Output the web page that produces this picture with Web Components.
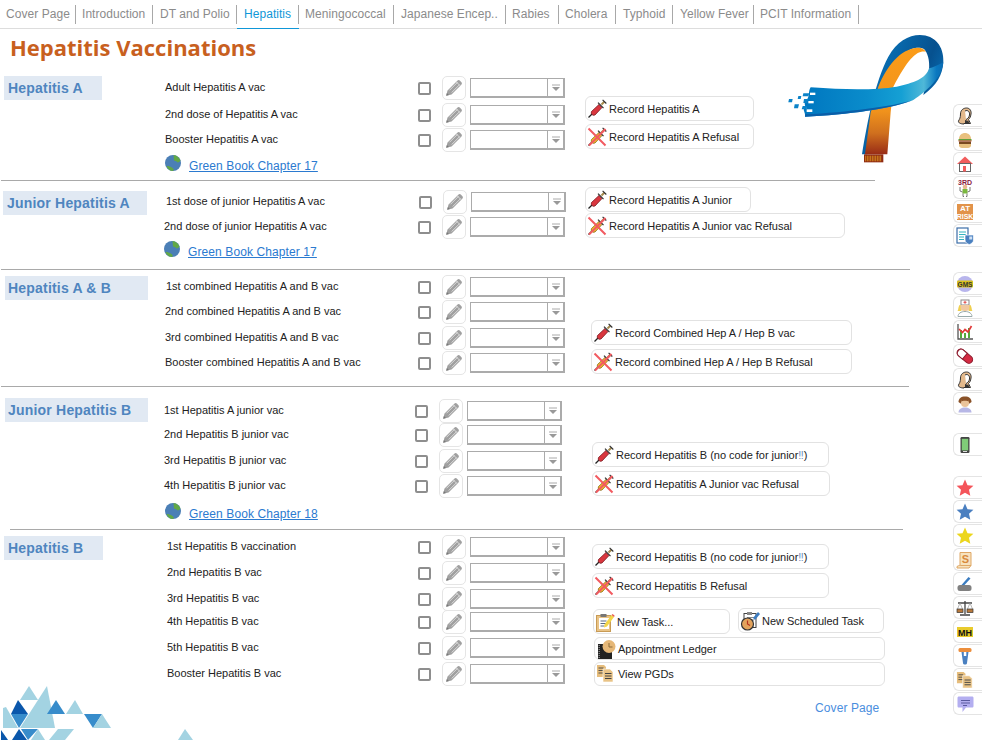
<!DOCTYPE html>
<html><head><meta charset="utf-8">
<style>
html,body{margin:0;padding:0;background:#fff}
body{width:982px;height:740px;overflow:hidden;font-family:"Liberation Sans",Arial,sans-serif}
#page{display:flex;flex-direction:column;width:982px;height:740px;position:relative}
#body{display:flex;flex:1;min-height:0}
#main{width:953px;flex:none;display:flex;flex-direction:column}
</style></head><body>
<div id="page">
<vx-tabs></vx-tabs>
<div id="body">
<div id="main">
<vx-title>Hepatitis Vaccinations</vx-title>

<vx-section head="Hepatitis A" hx="4" hy="0" hw="98" rt="0" h="105" lx="1" lw="874">
  <vx-row label="Adult Hepatitis A vac" lx="165" cx="418" px="442" sx="470" t="0"></vx-row>
  <vx-row label="2nd dose of Hepatitis A vac" lx="165" cx="418" px="442" sx="470" t="3"></vx-row>
  <vx-row label="Booster Hepatitis A vac" lx="165" cx="418" px="442" sx="470" t="1"></vx-row>
  <vx-link x="165" t="3">Green Book Chapter 17</vx-link>
  <vx-btn slot="btn" x="585" w="169" t="20" icon="syr">Record Hepatitis A</vx-btn>
  <vx-btn slot="btn" x="585" w="169" t="3" icon="no">Record Hepatitis A Refusal</vx-btn>
</vx-section>

<vx-section head="Junior Hepatitis A" hx="3" hy="10" hw="144" rt="9" h="89" lx="1" lw="909">
  <vx-row label="1st dose of junior Hepatitis A vac" lx="166" cx="419" px="443" sx="471" t="0"></vx-row>
  <vx-row label="2nd dose of junior Hepatitis A vac" lx="164" cx="418" px="442" sx="470" t="1"></vx-row>
  <vx-link x="164" t="2">Green Book Chapter 17</vx-link>
  <vx-btn slot="btn" x="585" w="166" t="6" icon="syr">Record Hepatitis A Junior</vx-btn>
  <vx-btn slot="btn" x="585" w="260" t="1" icon="no">Record Hepatitis A Junior vac Refusal</vx-btn>
</vx-section>

<vx-section head="Hepatitis A &amp; B" hx="5" hy="6" hw="143" hp="3" rt="5" h="117" lx="1" lw="908">
  <vx-row label="1st combined Hepatitis A and B vac" lx="166" cx="418" px="442" sx="470" t="0"></vx-row>
  <vx-row label="2nd combined Hepatitis A and B vac" lx="165" cx="418" px="442" sx="470" t="1"></vx-row>
  <vx-row label="3rd combined Hepatitis A and B vac" lx="165" cx="418" px="442" sx="470" t="2"></vx-row>
  <vx-row label="Booster combined Hepatitis A and B vac" lx="165" cx="418" px="442" sx="470" t="1"></vx-row>
  <vx-btn slot="btn" x="591" w="261" t="50" icon="syr">Record Combined Hep A / Hep B vac</vx-btn>
  <vx-btn slot="btn" x="591" w="261" t="4" icon="no">Record combined Hep A / Hep B Refusal</vx-btn>
</vx-section>

<vx-section head="Junior Hepatitis B" hx="5" hy="11" hw="143" hp="3" rt="12" h="143" lx="10" lw="893">
  <vx-row label="1st Hepatitis A junior vac" lx="164" cx="415" px="439" sx="467" t="0"></vx-row>
  <vx-row label="2nd Hepatitis B junior vac" lx="164" cx="415" px="439" sx="467" t="0"></vx-row>
  <vx-row label="3rd Hepatitis B junior vac" lx="164" cx="415" px="439" sx="467" t="2"></vx-row>
  <vx-row label="4th Hepatitis B junior vac" lx="164" cx="415" px="439" sx="467" t="1"></vx-row>
  <vx-link x="165" t="5">Green Book Chapter 18</vx-link>
  <vx-btn slot="btn" x="592" w="237" t="55" icon="syr">Record Hepatitis B (no code for junior<span style="color:#6f8fc0">‼</span>)</vx-btn>
  <vx-btn slot="btn" x="592" w="238" t="4" icon="no">Record Hepatitis A Junior vac Refusal</vx-btn>
</vx-section>

<vx-section head="Hepatitis B" hx="4" hy="6" hw="99" rt="5" fill>
  <vx-row label="1st Hepatitis B vaccination" lx="167" cx="418" px="442" sx="470" t="0"></vx-row>
  <vx-row label="2nd Hepatitis B vac" lx="167" cx="418" px="442" sx="470" t="2"></vx-row>
  <vx-row label="3rd Hepatitis B vac" lx="167" cx="418" px="442" sx="470" t="2"></vx-row>
  <vx-row label="4th Hepatitis B vac" lx="167" cx="418" px="442" sx="470" t="-1"></vx-row>
  <vx-row label="5th Hepatitis B vac" lx="167" cx="418" px="442" sx="470" t="2"></vx-row>
  <vx-row label="Booster Hepatitis B vac" lx="167" cx="418" px="442" sx="470" t="2"></vx-row>
  <vx-btn slot="btn" x="592" w="237" t="14" icon="syr">Record Hepatitis B (no code for junior<span style="color:#6f8fc0">‼</span>)</vx-btn>
  <vx-btn slot="btn" x="592" w="237" t="4" icon="no">Record Hepatitis B Refusal</vx-btn>
  <vx-pair slot="btn">
    <vx-btn x="593" w="137" t="11" icon="task">New Task...</vx-btn>
    <vx-btn x="738" abut="730" w="146" t="10" icon="sched">New Scheduled Task</vx-btn>
  </vx-pair>
  <vx-btn slot="btn" x="594" w="291" t="3" icon="ledger" h="23">Appointment Ledger</vx-btn>
  <vx-btn slot="btn" x="594" w="291" t="2" icon="docs" h="24">View PGDs</vx-btn>
  <vx-cover slot="btn" x="815" t="14">Cover Page</vx-cover>
</vx-section>
</div>
<vx-sidebar></vx-sidebar>
</div>
<vx-ribbon></vx-ribbon>
<vx-tri></vx-tri>
</div>
<script>
class Base extends HTMLElement{
  render(html){const r=this.shadowRoot||this.attachShadow({mode:'open'});r.innerHTML=html;return r}
  n(a,d=0){return this.hasAttribute(a)?+this.getAttribute(a):d}
}
const syr=(c,d)=>`<path d="M1.5 18.500l4-4" stroke="#222" stroke-width="1.200"/><path d="M4.500 12.500l7.500-7 3 3-7 7.500-2 .3-1.800-1.800z" fill="${c}" stroke="${d}" stroke-width=".8"/><path d="M11 3.600l5.500 5.500" stroke="#333" stroke-width="1.300"/><path d="M14.500 5.500l2.800-2.800" stroke="#a58b4c" stroke-width="2"/><path d="M15.600 .8l3.700 3.700" stroke="#333" stroke-width="1.200"/>`;
const svg=(inner,s=20,vb=20)=>`<svg width="${s}" height="${s}" viewBox="0 0 ${vb} ${vb}">${inner}</svg>`;
const docs=`<path d="M1 1h7l2 2v10H1z" fill="#e6bd7c"/><path d="M2.500 4h5M2.500 6.500h5M2.500 9h5" stroke="#444" stroke-width=".9"/><path d="M7 5h7l3 3v10H7z" fill="#e9c386" stroke="#fff" stroke-width=".6"/><path d="M9 9.500h6.500M9 12h6.500M9 14.500h6.500" stroke="#444" stroke-width="1"/>`;
const BI={
 syr:syr('#d9363e','#7a1c22'),
 no:syr('#efbb2e','#8a6a1a')+`<path d="M1.500 1.500L18.500 18.500M18.500 2L2 18.500" stroke="#f25a60" stroke-width="2"/>`,
 task:`<rect x="1.500" y="3.500" width="14" height="16" fill="#e9c386" stroke="#c89b55"/><rect x="4" y="6" width="10" height="11" fill="#fff"/><rect x="5.500" y="2" width="6" height="3" fill="#777"/><path d="M5.500 9h6M5.500 11.500h6M5.500 14h4" stroke="#5a6a80" stroke-width="1"/><path d="M9.500 12.500L16.500 3l2.500 2-7 9.500-3 1z" fill="#f3d64a"/><path d="M16.500 3l2.500 2 .7-1.300-2-1.800z" fill="#ea5a50"/>`,
 sched:`<rect x="4" y="2.500" width="12" height="14" fill="#fff" stroke="#444"/><rect x="7" y="1" width="5" height="3" fill="#888"/><path d="M7 6.500h7M7 9h7" stroke="#888"/><path d="M13 7l5-6 2 2-5 6z" fill="#3d7cc0"/><circle cx="7.500" cy="13" r="6" fill="#e3a35c" stroke="#333" stroke-width="1.200"/><path d="M7.500 9.500v3.500l2.500 1.500" stroke="#b5321f" fill="none" stroke-width="1.200"/>`,
 ledger:`<rect x="2" y="5" width="14" height="15" fill="#222"/><path d="M3.200 6v13" stroke="#999" stroke-width="1.200" stroke-dasharray="1 1"/><circle cx="13" cy="7.500" r="6.500" fill="#e6b878"/><path d="M13 4v4h3.500" stroke="#8a6a3a" fill="none"/>`,
 docs,
};
const HEAD=`<path d="M8 17c-3 0-6-1-5.500-3 1-2 2-3 2-7 0-4 3-6 6-6 3.500 0 5 3 4.500 6-.5 3-1 4-2.500 5.500l2 4H8z" fill="#e3b98c" stroke="#333"/><path d="M9 4c3-1.500 5 1 4.500 4-.5 2.500-2 4-3.500 4.500" fill="#fff" stroke="#333"/><path d="M9 13l3.500 1 1 3H9z" fill="#333"/>`;
const STAR=c=>`<path d="M9 .6l2.500 5.600 5.900.6-4.400 4 1.300 6L9 13.800 3.700 16.800l1.300-6-4.400-4 5.900-.6z" fill="${c}"/>`;
const SI=[
HEAD,
`<path d="M3 8C3 4 6 2 9 2s6 2 6 6z" fill="#e8c07e"/><rect x="2.500" y="8" width="13" height="1.800" fill="#5fa03a"/><rect x="2.500" y="9.500" width="13" height="1" fill="#d24a3a"/><rect x="3" y="10.500" width="12" height="2.500" fill="#7a4a20"/><path d="M3 13h12v1.500C15 16 13.500 17 12 17H6c-1.500 0-3-1-3-2.500z" fill="#e8c07e"/>`,
`<path d="M9 1.500L1 9h16z" fill="#f25c5c"/><rect x="3.500" y="8.500" width="11" height="8" fill="#fff" stroke="#666"/><rect x="7" y="11" width="3" height="5.500" fill="#f25c5c"/>`,
`<text x="9" y="6" text-anchor="middle" font-family="Liberation Sans" font-weight="700" font-size="7" fill="#8a1a3c">3RD</text><circle cx="9" cy="8" r="2.300" fill="#e8b890"/><rect x="6.500" y="10" width="5" height="4.500" fill="#7ab83e"/><path d="M4 8v4l2.500 1M14 8v4l-2.500 1M7 14.500v3h1M11 14.500v3h-1" stroke="#555" fill="none" stroke-width=".8"/>`,
`<rect x="1" y="1" width="16" height="16" fill="#e2934a"/><text x="9" y="8.300" text-anchor="middle" font-family="Liberation Sans" font-weight="700" font-size="8" fill="#fff">AT</text><text x="9" y="16.300" text-anchor="middle" font-family="Liberation Sans" font-weight="700" font-size="7" fill="#fff">RISK</text>`,
`<rect x="1" y="1" width="11" height="15" fill="#fff" stroke="#3c6ea8" stroke-width="1.200"/><path d="M3 5h7M3 7.500h7M3 10h5M3 12.500h5" stroke="#35b4c0" stroke-width="1"/><path d="M9 8h8.500v5c0 2.500-2.500 4-4.250 4.500C11.500 17 9 15.500 9 13z" fill="#4a80c0" stroke="#fff" stroke-width=".7"/><path d="M13.250 9.500v6.500M13.250 9.500h3v3h-3" fill="#cfe0f3"/>`,
`<circle cx="9" cy="9" r="8" fill="#b8b5ec"/><rect x="1" y="5.500" width="16" height="7" rx="1" fill="#d9c21e"/><text x="9" y="11.500" text-anchor="middle" font-family="Liberation Sans" font-weight="700" font-size="6.500" fill="#333">GMS</text>`,
`<rect x="5" y="1" width="8" height="5" fill="#fff" stroke="#888"/><path d="M9 1.800v3M7.500 3.300h3" stroke="#e04a4a"/><path d="M4 6h10v2c0 3-2 4-5 4s-5-1-5-4z" fill="#f0c8a0"/><path d="M3.500 6c-1.500 2-1 5-2 6h4c-1-2-1-4-1-6zM14.500 6c1.500 2 1 5 2 6h-4c1-2 1-4 1-6z" fill="#efcf4e"/><path d="M2 17.500c0-3 3-5 7-5s7 2 7 5z" fill="#fff" stroke="#9aa"/>`,
`<path d="M2 1v15h15" stroke="#555" fill="none" stroke-width="1.300"/><path d="M4 15V7h2v8zM8 15V10h2v5zM12 15V5h2v10z" fill="#56a83c"/><path d="M3 6l3.500 3.500L9 6.500 12 9l3.500-6" stroke="#e23a3a" fill="none" stroke-width="1.700"/>`,
`<g transform="rotate(40 9 9)"><rect x="0" y="5.500" width="18" height="7.500" rx="3.700" fill="#d42a42" stroke="#8a1a2c"/><path d="M3.700 5.500H9V13H3.700C1.800 13 .5 11 .5 9.250S1.800 5.500 3.700 5.500z" fill="#fff" stroke="#8a1a2c"/></g>`,
HEAD,
`<path d="M2.500 17.500c0-3.500 3-5 6.500-5s6.500 1.500 6.500 5z" fill="#b7b7e6"/><path d="M9 1.500c4 0 6.500 2 6.500 5.500l-2 1.500H4.500l-2-1.500c0-3.500 2.500-5.500 6.500-5.500z" fill="#8a5228"/><circle cx="9" cy="8" r="4" fill="#eac39a"/><path d="M5 6.500c1.500-1 6.500-1 8 0L12 4H6z" fill="#8a5228"/>`,
`<rect x="4.500" y="1" width="9" height="16" rx="1.200" fill="#444"/><rect x="5.800" y="2.800" width="6.400" height="11.600" fill="#7fcb78"/><rect x="7" y="15" width="4" height="1" fill="#ddd"/>`,
STAR('#f4545a'),STAR('#4a7fc0'),STAR('#ecd61c'),
`<path d="M4 1.500h11v13H4z" fill="#f7e3bf" stroke="#dfa765"/><path d="M1 15.500c2-1.500 4-1 4-1h10l-2 2.500H1z" fill="#f7e3bf" stroke="#dfa765"/><text x="9.500" y="11.500" text-anchor="middle" font-family="Liberation Sans" font-weight="700" font-size="11" fill="#d98a3c">S</text>`,
`<rect x="1.500" y="10" width="14" height="6" rx="2.500" fill="#808080"/><path d="M5.500 10l7-8 2 1.500-6 6.500z" fill="#3a7cc0"/>`,
`<path d="M9 2v13M4 16h10M2 4h14" stroke="#444" stroke-width="1.300"/><path d="M4 4L1.500 10M4 4l2.500 6M14 4l-2.500 6M14 4l2.500 6" stroke="#999" stroke-width=".7"/><rect x="1" y="10" width="6" height="3.500" fill="#b97a3c" stroke="#333" stroke-width=".7"/><rect x="11" y="10" width="6" height="3.500" fill="#b97a3c" stroke="#333" stroke-width=".7"/>`,
`<rect x="1" y="4" width="16" height="10" fill="#e9cb2c"/><text x="9" y="12.500" text-anchor="middle" font-family="Liberation Sans" font-weight="700" font-size="9" fill="#111">MH</text>`,
`<rect x="2.500" y="1" width="13" height="4" rx="1.500" fill="#ec8e3c"/><path d="M5.500 5h7l-1.500 11c0 1-1 1.500-2 1.500s-2-.5-2-1.500z" fill="#4a80c0"/><rect x="7.800" y="5" width="2.500" height="4" fill="#fff"/>`,
`<g transform="scale(.95)">${docs}</g>`,
`<path d="M3 1.500h13c1 0 1.500.5 1.500 1.500v8c0 1-.5 1.500-1.500 1.500h-6L6.500 17v-4.500H3C2 12.500 1.500 12 1.500 11V3C1.500 2 2 1.500 3 1.500z" fill="#b3aef0"/><path d="M5 5.500h9M5 8h9M7 10.500h4" stroke="#5a5aa0"/>`
];
class VxTabs extends Base{connectedCallback(){
 const T=[["Cover Page",76,6],["Introduction",77,6],["DT and Polio",84,7],["Hepatitis",62,7],["Meningococcal",95,6],["Japanese Encep..",112,7],["Rabies",53,6],["Cholera",57,6],["Typhoid",57,7],["Yellow Fever",81,7],["PCIT Information",105,6]];
 this.render(`<style>:host{display:flex;flex:none;height:29px;box-sizing:border-box;border-bottom:1px solid #ddd;font:12px "Liberation Sans",sans-serif;letter-spacing:.05px;color:#8b8b8b}
 .t{box-sizing:border-box;height:19px;margin-top:5px;border-right:1px solid #a8a8a8;line-height:19px;white-space:nowrap;position:relative}
 .a{color:#0f97d8}
 .a::after{content:"";position:absolute;left:0;right:-1px;top:23px;height:1px;background:#0f97d8}
 </style>`+T.map(([n,w,p],i)=>`<div class="t ${i==3?'a':''}" style="width:${w}px;padding-left:${p}px">${n}</div>`).join(''))
}}
class VxTitle extends Base{connectedCallback(){this.render(`<style>:host{display:block;flex:none;height:47px;box-sizing:border-box;padding:3px 0 0 10px;font:700 22px/30px "Open Sans",sans-serif;color:#c8601e}</style><slot></slot>`)}}
class VxSection extends Base{connectedCallback(){
 const fill=this.hasAttribute('fill');
 this.render(`<style>:host{display:flex;flex-direction:column;box-sizing:border-box;${fill?'flex:1;min-height:0':`flex:none;height:${this.n('h')}px`}}
 .c{display:flex;flex:1;min-height:0}
 .hw{width:160px;flex:none}
 .h{margin:${this.n('hy')}px 0 0 ${this.n('hx')}px;width:${this.n('hw')}px;box-sizing:border-box;height:24px;padding-left:${this.n('hp',4)}px;background:#e1e9f3;color:#4f85bf;font:700 14px/24px "Liberation Sans",sans-serif;letter-spacing:.2px;white-space:nowrap}
 .r{width:423px;flex:none;display:flex;flex-direction:column;padding-top:${this.n('rt')}px;box-sizing:border-box}
 .b{flex:1;display:flex;flex-direction:column;min-width:0}
 .l{flex:none;height:1px;background:#a9a9a9;margin-left:${this.n('lx')}px;width:${this.n('lw')}px}
 </style><div class="c"><div class="hw"><div class="h">${this.getAttribute('head').replace('&','&amp;')}</div></div><div class="r"><slot></slot></div><div class="b"><slot name="btn"></slot></div></div>${fill?'':'<div class="l"></div>'}`)
}}
class VxRow extends Base{connectedCallback(){
 const lx=this.n('lx'),cx=this.n('cx'),px=this.n('px'),sx=this.n('sx');
 this.render(`<style>:host{display:flex;flex:none;height:24px;margin-top:${this.n('t')}px;align-items:flex-start}
 .lb{box-sizing:border-box;margin-left:${lx-160}px;width:${cx-lx}px;font:11px/22px "Liberation Sans",sans-serif;color:#222;white-space:nowrap}
 .ck{box-sizing:border-box;width:13px;height:13px;margin-top:6px;border:2px solid #8e8e8e;border-radius:2px;background:#fff;flex:none}
 .pn{box-sizing:border-box;width:24px;height:24px;margin-left:${px-cx-13}px;border:1px solid #e5e5e5;border-radius:5px;flex:none;display:flex;align-items:center;justify-content:center}
 .se{box-sizing:border-box;width:95px;height:20px;margin:2px 0 0 ${sx-px-24}px;border:1px solid #ababab;border-right-width:2px;border-bottom-width:2px;flex:none;display:flex;justify-content:flex-end}
 .ar{box-sizing:border-box;width:16px;height:100%;border-left:1px solid #ababab;display:flex;align-items:center;justify-content:center}
 </style><div class="lb">${this.getAttribute('label')}</div><div class="ck"></div><div class="pn"><svg width="18" height="18" viewBox="0 0 18 18"><path d="M1.200 16.800l1.300-5.300L12.300 1.700c.8-.8 1.800-.8 2.500-.1l1.600 1.600c.7.7.7 1.700-.1 2.500L6.500 15.500z" fill="#a0a0a0"/><path d="M4.500 11.300l8-8M6.700 13.500l8-8M11.200 2.800l4 4" stroke="#e9e9e9" stroke-width=".8"/><path d="M1.200 16.800l.7-2.800 2.100 2.100z" fill="#777"/></svg></div><div class="se"><div class="ar"><svg width="10" height="8" viewBox="0 0 10 8"><path d="M1 1h8" stroke="#aaa"/><path d="M1 3h8L5 7z" fill="#999"/></svg></div></div>`)
}}
class VxLink extends Base{connectedCallback(){
 this.render(`<style>:host{display:flex;flex:none;align-items:center;height:16px;margin:${this.n('t')}px 0 0 ${this.n('x')-160}px}
 svg{flex:none;margin-right:8px}
 span{font:12px/16px "Liberation Sans",sans-serif;letter-spacing:.1px;color:#2b7ad0;text-decoration:underline;white-space:nowrap;padding-top:6px}
 </style><svg width="16" height="16" viewBox="0 0 16 16"><circle cx="8" cy="8" r="8" fill="#4b7fb6"/><path d="M8.500 0c3 .3 6 2.500 7 5.500-1 1.500-2.500 2.500-3.500 1.500S11.500 6 10 6 9 3 8.500 0zM1.500 11c2 0 4 .5 6 2s1 2.500 .5 3c-3 0-5.500-2-6.500-5z" fill="#62a846"/></svg><span><slot></slot></span>`)
}}
class VxBtn extends Base{connectedCallback(){
 const base=this.hasAttribute('abut')?this.n('abut'):583;
 this.render(`<style>:host{display:flex;flex:none;box-sizing:border-box;align-items:center;width:${this.n('w')}px;height:${this.n('h',25)}px;margin:${this.n('t')}px 0 0 ${this.n('x')-base}px;border:1px solid #e2e2e2;border-radius:6px;padding-left:1px;font:11px "Liberation Sans",sans-serif;letter-spacing:-.03px;color:#222;white-space:nowrap;background:#fff}
 svg{flex:none;margin-right:2px}
 </style>${svg(BI[this.getAttribute('icon')])}<span><slot></slot></span>`)
}}
class VxPair extends Base{connectedCallback(){this.render(`<style>:host{display:flex;flex:none;align-items:flex-start}</style><slot></slot>`)}}
class VxCover extends Base{connectedCallback(){this.render(`<style>:host{display:block;flex:none;margin:${this.n('t')}px 0 0 ${this.n('x')-583}px;font:12px/16px "Liberation Sans",sans-serif;letter-spacing:.1px;color:#4a8ede}</style><slot></slot>`)}}
class VxSidebar extends Base{connectedCallback(){
 const gaps={5:25,11:18,12:20};
 this.render(`<style>:host{display:flex;flex-direction:column;width:29px;flex:none;padding-top:75px;box-sizing:border-box}
 .t{box-sizing:border-box;height:23px;margin-bottom:1px;border:1px solid #e4e4e4;border-right:0;border-radius:6px 0 0 6px;display:flex;align-items:center;padding-left:2px;flex:none}
 </style>`+SI.map((s,i)=>`<div class="t" style="${gaps[i]?`margin-bottom:${gaps[i]}px`:''}"><svg width="18" height="18" viewBox="0 0 18 18">${s}</svg></div>`).join(''))
}}
class VxRibbon extends Base{connectedCallback(){
 this.render(`<style>:host{position:absolute;left:780px;top:25px;width:170px;height:145px;display:block;pointer-events:none}</style>
<svg width="170" height="145" viewBox="0 0 510 435">
<defs>
<linearGradient id="lp" x1="0" y1="0" x2="1" y2=".6"><stop offset="0" stop-color="#0a80c8"/><stop offset=".7" stop-color="#06518f"/><stop offset="1" stop-color="#0a75bd"/></linearGradient>
<linearGradient id="or" x1="0" y1="0" x2="0" y2="1"><stop offset="0" stop-color="#fb9c18"/><stop offset=".6" stop-color="#f0921c"/><stop offset=".8" stop-color="#d0701e"/><stop offset="1" stop-color="#982c16"/></linearGradient>
<linearGradient id="bd" x1="0" y1="0" x2="1" y2="0"><stop offset="0" stop-color="#0077c0"/><stop offset=".45" stop-color="#0a8ccb"/><stop offset=".7" stop-color="#15a0d4"/><stop offset=".86" stop-color="#4fb8d8"/><stop offset=".95" stop-color="#0a78c0"/><stop offset="1" stop-color="#0a6cb4"/></linearGradient>
</defs>
<path d="M246 388C262 290 285 170 325 95 350 50 385 30 420 30 465 30 492 65 490 110 488 150 470 180 430 210L447 135C450 105 442 82 432 72 420 66 395 66 375 85 340 115 310 170 290 235L262 388z" fill="url(#lp)"/>
<path d="M255 388L272 262 295 185C320 125 360 70 415 68 425 68 432 72 438 80 410 75 385 100 340 185L332 262 322 388z" fill="url(#or)"/>
<path d="M92 187C200 195 290 195 350 185 400 175 440 160 447 130 458 128 475 120 490 112 488 155 440 200 400 225 340 250 200 270 75 275 78 262 62 250 80 250 72 240 72 228 82 222 90 210 84 200 92 187z" fill="url(#bd)"/>
<path d="M75 275C200 270 340 250 400 225 340 244 200 262 76 268z" fill="#0a5ea8"/>
<g fill="#fff"><rect x="90" y="203" width="16" height="7"/><rect x="85" y="228" width="16" height="7"/><rect x="80" y="253" width="17" height="8"/></g>
<g fill="#0a82c8"><path d="M27 222h11l-2 10H25z"/><path d="M55 213h9l-2 9h-9z"/><path d="M44 238h13l-3 12H42z"/><path d="M72 222h13l-3 12H70z"/><path d="M70 205h18l-3 9H68z"/><path d="M68 243h13l-3 10H65z"/></g>
<rect x="252" y="388" width="58" height="24" fill="#8f2a12"/>
<path d="M257 392v17M262 392v17M267 392v17M272 392v17M277 392v17M282 392v17M287 392v17M292 392v17M297 392v17M302 392v17" stroke="#f3b223" stroke-width="2"/>
</svg>`)
}}
class VxTri extends Base{connectedCallback(){
 const L='#a3d3e2',M='#378ccb',D='#0a57ab';
 const P=[[L,'29,686 20,700 38,700'],[L,'47,686 20,728 55,728'],[L,'3,708 6,707 18,728 3,728'],[D,'18,700 11,714 28,714'],[M,'11,714 28,714 19,728'],[M,'56,700 47,714 65,714'],[L,'75,700 66,714 83,714'],[M,'84,714 102,714 93,728'],[L,'102,714 93,728 111,728'],[D,'1,730 8,740 1,740'],[D,'19,729 12,740 27,740'],[M,'21,729 38,729 28,740'],[L,'38,729 31,740 45,740'],[L,'58,729 74,729 65,740 49,740'],[L,'185,729 178,740 193,740']];
 this.render(`<style>:host{position:absolute;left:0;top:680px;width:200px;height:60px;display:block;pointer-events:none}</style><svg width="200" height="60" viewBox="0 680 200 60">${P.map(([c,p])=>`<polygon fill="${c}" points="${p}"/>`).join('')}</svg>`)
}}
const D={'vx-tabs':VxTabs,'vx-title':VxTitle,'vx-section':VxSection,'vx-row':VxRow,'vx-link':VxLink,'vx-btn':VxBtn,'vx-pair':VxPair,'vx-cover':VxCover,'vx-sidebar':VxSidebar,'vx-ribbon':VxRibbon,'vx-tri':VxTri};
for(const k in D)customElements.define(k,D[k]);
</script>
</body></html>
